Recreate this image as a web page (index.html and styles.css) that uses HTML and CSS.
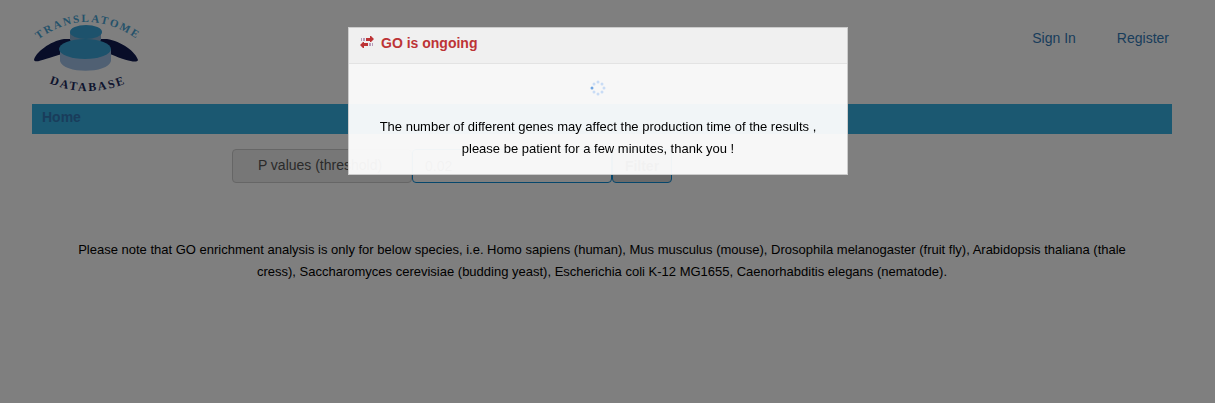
FILE: index.html
```html
<!DOCTYPE html>
<html lang="en">
<head>
    <meta charset="UTF-8">
    <meta name="viewport" content="width=device-width, initial-scale=1.0">
    <title>Translatome Database</title>
    <link rel="stylesheet" href="styles.css">
</head>
<body>
    <div class="container">
        <!-- header -->
        <header class="header">
            <a class="logo" href="#" aria-label="Translatome Database">
                <svg width="112" height="84" viewBox="0 0 112 84">
                    <defs>
                        <path id="arc-top" d="M3 32 Q54 -8 109 32"/>
                        <path id="arc-bottom" d="M10 70 Q55 92 102 70"/>
                    </defs>
                    <path d="M2 50 C3 43 18 31 32 29 H75 C89 31 104 42 106 50 C105 53 97 52 78 44 H30 C15 48 3 54 2 50Z" fill="#101a50"/>
                    <path d="M38 22 V30 C41 36 66 36 69 30 V22Z" fill="#8aaed0"/>
                    <ellipse cx="54" cy="22" rx="16" ry="7" fill="#3aa5d8"/>
                    <path d="M28 39 V51 C31 64 76 64 79 51 V39Z" fill="#a0c0e6"/>
                    <ellipse cx="53" cy="39" rx="26" ry="10" fill="#3aa5d8"/>
                    <text class="logo-top"><textPath href="#arc-top" startOffset="50%">TRANSLATOME</textPath></text>
                    <text class="logo-bottom"><textPath href="#arc-bottom" startOffset="50%">DATABASE</textPath></text>
                </svg>
            </a>
            <div class="user-links">
                <a href="#">Sign In</a>
                <a href="#">Register</a>
            </div>
        </header>

        <nav class="navbar">
            <a href="#">Home</a>
        </nav>

        <!-- threshold filter -->
        <form class="filter">
            <label class="filter-label" for="pvalue">P values (threshold)</label>
            <input class="filter-input" type="text" id="pvalue" value="0.02">
            <button class="filter-btn" type="button">Filter</button>
        </form>

        <p class="note">Please note that GO enrichment analysis is only for below species, i.e. Homo sapiens (human), Mus musculus (mouse), Drosophila melanogaster (fruit fly), Arabidopsis thaliana (thale cress), Saccharomyces cerevisiae (budding yeast), Escherichia coli K-12 MG1655, Caenorhabditis elegans (nematode).</p>
    </div>

    <!-- progress dialog -->
    <div class="mask">
        <div class="dialog" role="dialog" aria-labelledby="dialog-title">
            <div class="dialog-header">
                <svg class="icon-transfer" width="14" height="12" viewBox="0 0 14 12">
                    <path d="M6 2h4V0h1l3 3l-3 3h-1V5H6z M8 7H4V6H3L0 9l3 3h1v-2h4z" fill="#bd3436"/>
                    <path d="M1 2h1v3H1z M3 2h2v3H3z M9 7h2v3H9z M12 7h1v3h-1z" fill="#b79ab8"/>
                </svg>
                <span id="dialog-title">GO is ongoing</span>
            </div>
            <div class="dialog-body">
                <svg class="loading" width="16" height="16" viewBox="0 0 16 16" fill="#c9dcf5">
                    <circle cx="8" cy="2" r="1.500"/>
                    <circle cx="12" cy="4" r="1.500"/>
                    <circle cx="14" cy="8" r="1.500"/>
                    <circle cx="12" cy="12" r="1.500"/>
                    <circle cx="8" cy="14" r="1.500"/>
                    <circle cx="4" cy="12" r="1.500"/>
                    <circle cx="2" cy="8" r="1.500" fill="#6fa5e3"/>
                    <circle cx="4" cy="4" r="1.500"/>
                </svg>
                <p>The number of different genes may affect the production time of the results ,<br>please be patient for a few minutes, thank you !</p>
            </div>
        </div>
    </div>
</body>
</html>
```

FILE: styles.css
```css
* {
    box-sizing: border-box;
}
body {
    margin: 0;
    background-color: #fff;
    font-family: "Liberation Sans", Arial, sans-serif;
    font-size: 13px;
    line-height: 22px;
    color: #000;
}
a {
    color: #337ab7;
    text-decoration: none;
}
.container {
    max-width: 1183px;
    margin: 0 auto;
    padding: 10px 27px 0 16px;
}
.header {
    display: flex;
    justify-content: space-between;
    height: 94px;
}
.logo svg {
    display: block;
}
.logo-top,
.logo-bottom {
    font-family: "Liberation Serif", "Times New Roman", serif;
    font-size: 11px;
    font-weight: bold;
    letter-spacing: 2px;
    text-anchor: middle;
}
.logo-top {
    fill: #4aa5d5;
}
.logo-bottom {
    font-size: 12px;
    fill: #202a5c;
}
.user-links {
    display: flex;
    gap: 41px;
    padding: 17px 3px 0 0;
    font-size: 14px;
}
.navbar {
    height: 30px;
    padding: 2px 10px;
    background-color: #36b0e2;
    font-size: 14px;
    font-weight: bold;
}
.filter {
    display: flex;
    width: 440px;
    margin: 15px 0 0 200px;
}
.filter-label,
.filter-input,
.filter-btn {
    height: 34px;
    border: 1px solid #ccc;
    border-radius: 4px;
    font-family: inherit;
    font-size: 14px;
}
.filter-label {
    width: 180px;
    padding-right: 4px;
    line-height: 30px;
    text-align: center;
    background-color: #eee;
    color: #555;
}
.filter-input {
    flex: 1;
    min-width: 0;
    padding: 6px 12px;
    border-color: #0c8ed9;
    color: #555;
}
.filter-btn {
    width: 60px;
    padding: 0;
    background-color: #d4d4d4;
    border-color: #0c8ed9;
    color: #333;
    font-weight: bold;
}
.note {
    margin: 56px 40px 0;
    text-align: center;
}
.mask {
    position: fixed;
    top: 0;
    right: 0;
    bottom: 0;
    left: 0;
    padding: 27px 19px 0 0;
    background-color: rgba(0, 0, 0, 0.5);
}
.dialog {
    max-width: 500px;
    margin: 0 auto;
    border: 1px solid #ccc;
    background-color: rgba(255, 255, 255, 0.94);
}
.dialog-header {
    display: flex;
    gap: 7px;
    padding: 4px 11px 9px;
    border-bottom: 1px solid #e3e3e3;
    background-color: #f0f0f0;
    color: #bd3436;
    font-size: 14px;
    font-weight: bold;
}
.icon-transfer {
    margin-top: 4px;
}
.dialog-body {
    padding: 16px 30px 14px;
    text-align: center;
}
.loading {
    display: block;
    margin: 0 auto 20px;
}
.dialog-body p {
    margin: 0;
}
```
